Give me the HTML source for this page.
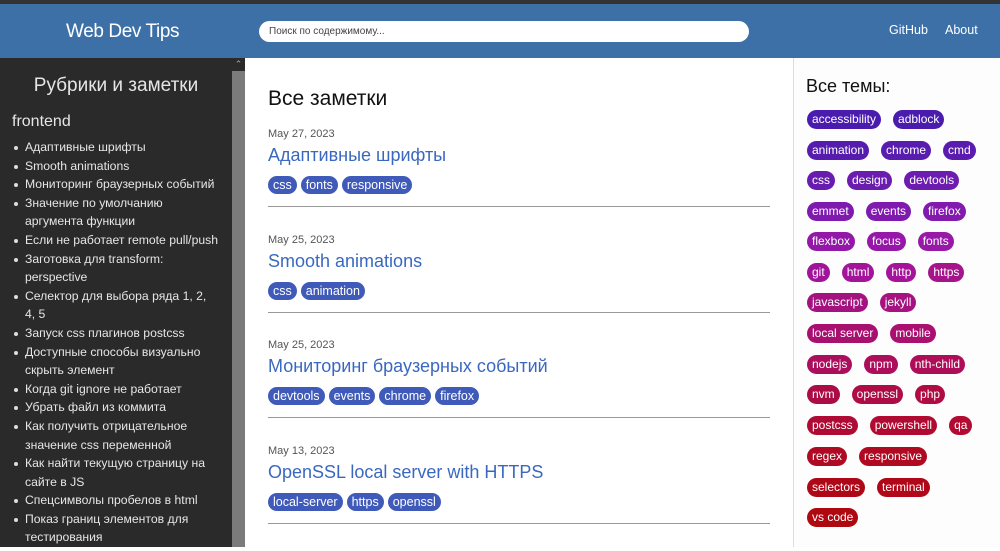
<!DOCTYPE html><html><head><meta charset="utf-8"><style>
*{box-sizing:border-box;margin:0;padding:0}
body{width:1000px;height:547px;overflow:hidden;font-family:"Liberation Sans",Arial,sans-serif;background:#fff;position:relative}
.top{position:absolute;left:0;top:0;width:1000px;height:4px;background:#333}
.hdr{position:absolute;left:0;top:4px;width:1000px;height:54px;background:#3e70a8}
.logo{position:absolute;left:66px;top:17px;color:#fff;font-size:19px;letter-spacing:-0.4px}
.search{position:absolute;left:259px;top:17px;width:490px;height:21px;background:#fff;border-radius:11px;font-size:10px;color:#444;padding:5px 10px}
.nav{position:absolute;top:19px;color:#fff;font-size:12.5px}
.side{position:absolute;left:0;top:58px;width:232px;height:489px;background:#2b2a2b;color:#e6e6e6}
.sb{position:absolute;left:232px;top:58px;width:13px;height:489px;background:#7b7b7b}
.sbt{position:absolute;left:232px;top:58px;width:13px;height:13px;background:#2b2a2b;color:#aaa;font-size:9px;text-align:center;line-height:13px}
.side h2{position:absolute;left:0;width:232px;top:17px;text-align:center;font-weight:normal;font-size:19px}
.side h3{position:absolute;left:12px;top:55px;font-weight:normal;font-size:16px}
.side ul{position:absolute;left:25px;top:80px;list-style:none;font-size:12.2px;line-height:18.6px}
.side li{position:relative}
.side li:before{content:"";position:absolute;left:-11px;top:8px;width:4px;height:4px;border-radius:50%;background:#ddd}
.main{position:absolute;left:268px;top:0;width:502px}
.main h1{position:absolute;top:87px;font-weight:normal;font-size:21px;color:#111}
.post{position:absolute;left:0;width:502px;height:106px}
.date{position:absolute;top:0;font-size:11px;color:#555}
.pt{position:absolute;top:17px;font-size:18px;color:#3a68c0}
.ptags{position:absolute;top:48px;display:flex;gap:4px}
.pg{background:#3f5ab8;color:#fff;font-size:12.5px;height:18px;line-height:18px;padding:0 5px;border-radius:9px}
.hr{position:absolute;top:73px;left:0;width:502px;height:1px;background:#999}
.right{position:absolute;left:793px;top:58px;width:207px;height:489px;background:#fdfdfd;border-left:1px solid #ddd}
.right h2{position:absolute;left:12px;top:18px;font-weight:normal;font-size:18px;color:#111}
.row{position:absolute;left:13px;display:flex;gap:12px}
.t{color:#fff;font-size:12px;height:19px;line-height:19px;padding:0 5px;border-radius:10px}
</style></head><body>
<div class="top"></div>
<div class="hdr"><div class="logo">Web Dev Tips</div><div class="search">Поиск по содержимому...</div>
<div class="nav" style="left:889px">GitHub</div><div class="nav" style="left:945px">About</div></div>
<div class="side"><h2>Рубрики и заметки</h2><h3>frontend</h3>
<ul><li>Адаптивные шрифты</li><li>Smooth animations</li><li>Мониторинг браузерных событий</li><li>Значение по умолчанию<br>аргумента функции</li><li>Если не работает remote pull/push</li><li>Заготовка для transform:<br>perspective</li><li>Селектор для выбора ряда 1, 2,<br>4, 5</li><li>Запуск css плагинов postcss</li><li>Доступные способы визуально<br>скрыть элемент</li><li>Когда git ignore не работает</li><li>Убрать файл из коммита</li><li>Как получить отрицательное<br>значение css переменной</li><li>Как найти текущую страницу на<br>сайте в JS</li><li>Спецсимволы пробелов в html</li><li>Показ границ элементов для<br>тестирования</li></ul></div>
<div class="sb"></div><div class="sbt">⌃</div>
<div class="main"><h1>Все заметки</h1>
<div class="post" style="top:128px"><div class="date">May 27, 2023</div><div class="pt">Адаптивные шрифты</div><div class="ptags"><span class="pg">css</span><span class="pg">fonts</span><span class="pg">responsive</span></div><div class="hr" style="top:78px"></div></div>
<div class="post" style="top:234px"><div class="date">May 25, 2023</div><div class="pt">Smooth animations</div><div class="ptags"><span class="pg">css</span><span class="pg">animation</span></div><div class="hr" style="top:78px"></div></div>
<div class="post" style="top:339px"><div class="date">May 25, 2023</div><div class="pt">Мониторинг браузерных событий</div><div class="ptags"><span class="pg">devtools</span><span class="pg">events</span><span class="pg">chrome</span><span class="pg">firefox</span></div><div class="hr" style="top:78px"></div></div>
<div class="post" style="top:445px"><div class="date">May 13, 2023</div><div class="pt">OpenSSL local server with HTTPS</div><div class="ptags"><span class="pg">local-server</span><span class="pg">https</span><span class="pg">openssl</span></div><div class="hr" style="top:78px"></div></div>
</div>
<div class="right"><h2>Все темы:</h2>
<div class="row" style="top:52px"><span class="t" style="background:#4a1cae">accessibility</span><span class="t" style="background:#4a1cae">adblock</span></div>
<div class="row" style="top:83px"><span class="t" style="background:#561cae">animation</span><span class="t" style="background:#581cae">chrome</span><span class="t" style="background:#5a1cae">cmd</span></div>
<div class="row" style="top:113px"><span class="t" style="background:#681caf">css</span><span class="t" style="background:#6a1caf">design</span><span class="t" style="background:#6c1caf">devtools</span></div>
<div class="row" style="top:144px"><span class="t" style="background:#7e1aae">emmet</span><span class="t" style="background:#801aae">events</span><span class="t" style="background:#821aae">firefox</span></div>
<div class="row" style="top:174px"><span class="t" style="background:#9418a8">flexbox</span><span class="t" style="background:#9618a8">focus</span><span class="t" style="background:#9818a8">fonts</span></div>
<div class="row" style="top:205px"><span class="t" style="background:#a0149a">git</span><span class="t" style="background:#a2149a">html</span><span class="t" style="background:#a4149a">http</span><span class="t" style="background:#a6148c">https</span></div>
<div class="row" style="top:235px"><span class="t" style="background:#a41280">javascript</span><span class="t" style="background:#a61280">jekyll</span></div>
<div class="row" style="top:266px"><span class="t" style="background:#a81070">local server</span><span class="t" style="background:#aa1070">mobile</span></div>
<div class="row" style="top:297px"><span class="t" style="background:#aa0e5c">nodejs</span><span class="t" style="background:#ac0e5c">npm</span><span class="t" style="background:#ae0e58">nth-child</span></div>
<div class="row" style="top:327px"><span class="t" style="background:#ac0c46">nvm</span><span class="t" style="background:#ae0c46">openssl</span><span class="t" style="background:#b00c44">php</span></div>
<div class="row" style="top:358px"><span class="t" style="background:#ae0a34">postcss</span><span class="t" style="background:#b00a32">powershell</span><span class="t" style="background:#b20a30">qa</span></div>
<div class="row" style="top:389px"><span class="t" style="background:#ae0a24">regex</span><span class="t" style="background:#b00a22">responsive</span></div>
<div class="row" style="top:420px"><span class="t" style="background:#ae0818">selectors</span><span class="t" style="background:#b00818">terminal</span></div>
<div class="row" style="top:450px"><span class="t" style="background:#ae0810">vs code</span></div>
</div>
</body></html>
